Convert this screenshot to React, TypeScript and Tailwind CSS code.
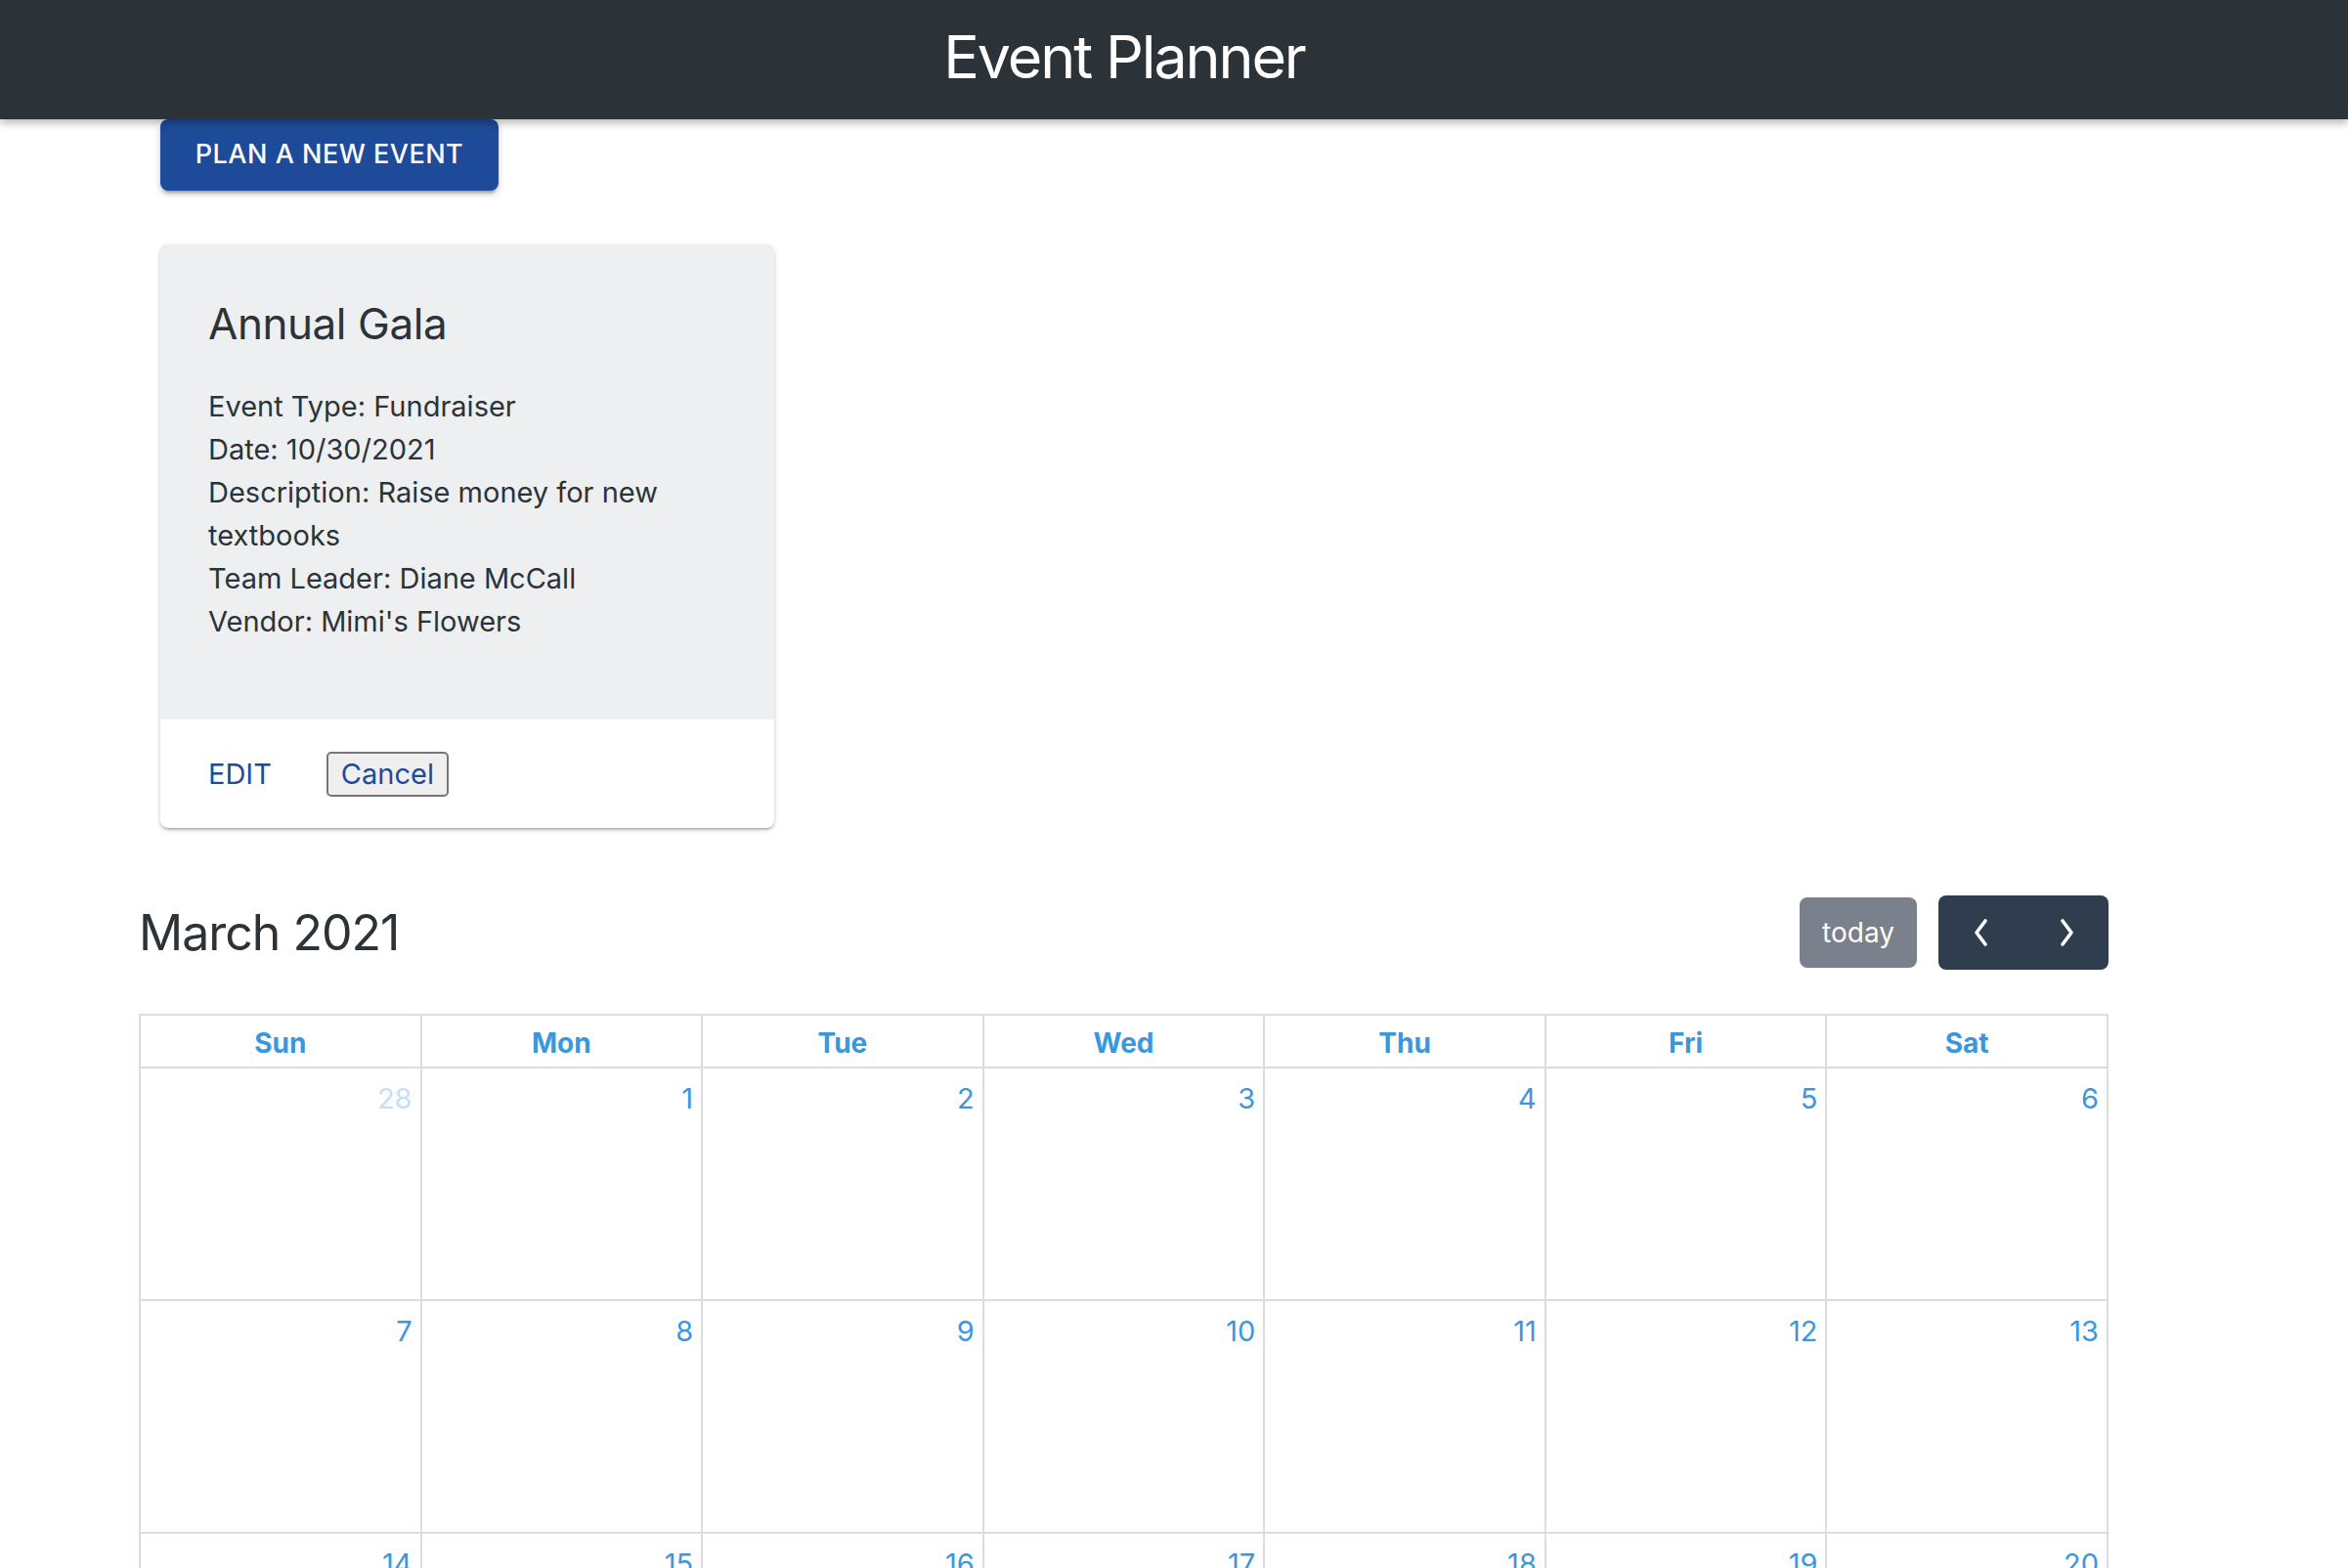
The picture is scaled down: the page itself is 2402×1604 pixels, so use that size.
import React from "react";

const FONT = { fontFamily: "Inter, 'Noto Sans', 'Liberation Sans', sans-serif" };

const days = ["Sun", "Mon", "Tue", "Wed", "Thu", "Fri", "Sat"];

function buildWeeks() {
  const weeks: { n: number; other: boolean }[][] = [];
  const cells: { n: number; other: boolean }[] = [{ n: 28, other: true }];
  for (let i = 1; i <= 31; i++) cells.push({ n: i, other: false });
  let a = 1;
  while (cells.length < 42) cells.push({ n: a++, other: true });
  for (let i = 0; i < 6; i++) weeks.push(cells.slice(i * 7, i * 7 + 7));
  return weeks;
}

export default function App() {
  const weeks = buildWeeks();
  return (
    <div className="min-h-screen bg-white text-[#2b3339]" style={FONT}>
      <header className="relative z-10 flex h-[122px] items-center justify-center bg-[#2b3339] pb-[6px] pr-[102px] shadow-[0_4px_8px_rgba(0,0,0,0.28)]">
        <h1 className="text-[61px] font-normal leading-none tracking-[-0.035em] text-white">Event Planner</h1>
      </header>

      <main className="flex flex-col">
        <div className="pl-[164px]">
          <button className="flex h-[73px] w-[346px] items-center justify-center rounded-[8px] bg-[#1e4a9a] text-[27px] font-medium uppercase tracking-[0.5px] text-white shadow-[0_6px_2px_-4px_rgba(0,0,0,0.2),0_4px_4px_0_rgba(0,0,0,0.14),0_2px_10px_0_rgba(0,0,0,0.12)]">
            Plan a new event
          </button>
        </div>

        <div className="mt-[55px] pl-[164px]">
          <div className="w-[628px] overflow-hidden rounded-[8px] bg-white shadow-[0_3px_2px_-2px_rgba(0,0,0,0.2),0_2px_3px_0_rgba(0,0,0,0.14),0_2px_6px_0_rgba(0,0,0,0.12)]">
            <div className="bg-[#eeeff1] pb-[78px] pl-[49px] pr-[48px] pt-[51px]">
              <h2 className="mb-[33px] text-[44px] font-normal leading-[60px] tracking-[-0.01em]">Annual Gala</h2>
              <div className="text-[29px] leading-[44px]">
                <p>Event Type: Fundraiser</p>
                <p>Date: 10/30/2021</p>
                <p>Description: Raise money for new textbooks</p>
                <p>Team Leader: Diane McCall</p>
                <p>Vendor: Mimi's Flowers</p>
              </div>
            </div>
            <div className="flex h-[111px] items-center pl-[49px]">
              <span className="text-[29px] leading-none text-[#1e4a9a]">EDIT</span>
              <button className="ml-[56px] flex h-[46px] w-[125px] items-center justify-center rounded-[5px] border-2 border-[#767676] bg-[#efefef] text-[29px] leading-none text-[#1e4a9a]">
                Cancel
              </button>
            </div>
          </div>
        </div>

        <section className="ml-[142px] mt-[69px] w-[2015px]">
          <div className="flex h-[76px] items-center justify-between">
            <h2 className="text-[50px] font-normal leading-none tracking-[-0.02em] text-[#2b3339]">March 2021</h2>
            <div className="flex items-center gap-[22px]">
              <button className="flex h-[72px] w-[120px] items-center justify-center rounded-[8px] bg-[#7b818c] text-[28px] text-white">
                today
              </button>
              <div className="flex h-[76px] w-[174px] items-center rounded-[8px] bg-[#2f3d4f]">
                <button className="flex h-full flex-1 items-center justify-center">
                  <svg width="18" height="30" viewBox="0 0 18 30" fill="none">
                    <polyline points="13,3 4,15 13,27" stroke="white" strokeWidth="3.6" strokeLinecap="round" strokeLinejoin="round" />
                  </svg>
                </button>
                <button className="flex h-full flex-1 items-center justify-center">
                  <svg width="18" height="30" viewBox="0 0 18 30" fill="none">
                    <polyline points="5,3 14,15 5,27" stroke="white" strokeWidth="3.6" strokeLinecap="round" strokeLinejoin="round" />
                  </svg>
                </button>
              </div>
            </div>
          </div>

          <div className="mt-[45px] grid grid-cols-7 border-l-2 border-t-2 border-[#dddddd]">
            {days.map((d) => (
              <div
                key={d}
                className="flex h-[54px] items-center justify-center border-b-2 border-r-2 border-[#dddddd] pt-[4px] text-[28px] font-bold text-[#3b97dd]"
              >
                {d}
              </div>
            ))}
            {weeks.flat().map((c, i) => (
              <div key={i} className="h-[238px] border-b-2 border-r-2 border-[#dddddd] pr-[8px] pt-[9px] text-right">
                <span className={`text-[29px] leading-[44px] ${c.other ? "text-[#c4e0f5]" : "text-[#3b97dd]"}`}>{c.n}</span>
              </div>
            ))}
          </div>
        </section>
      </main>
    </div>
  );
}
